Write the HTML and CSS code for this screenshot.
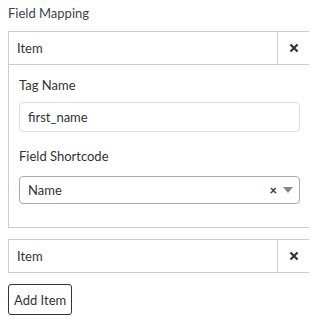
FILE: index.html
```html
<!DOCTYPE html>
<html>
<head>
<meta charset="utf-8">
<link rel="stylesheet" href="styles.css">
</head>
<body>
<div class="field">
  <div class="title">Field Mapping</div>
  <div class="item">
    <div class="item-head">
      <div class="item-name">Item</div>
      <button class="remove" aria-label="remove">
        <svg width="10" height="10" viewBox="0 0 10 10"><path d="M1.5 1.5 L8.5 8.5 M8.5 1.5 L1.5 8.5" stroke="#333" stroke-width="2.2" stroke-linecap="butt"/></svg>
      </button>
    </div>
    <div class="item-body">
      <label class="lbl">Tag Name</label>
      <div class="input">first_name</div>
      <label class="lbl lbl2">Field Shortcode</label>
      <div class="select">
        <span class="sel-text">Name</span>
        <span class="sel-clear">×</span>
        <span class="sel-arrow"></span>
      </div>
    </div>
  </div>
  <div class="item">
    <div class="item-head">
      <div class="item-name">Item</div>
      <button class="remove" aria-label="remove">
        <svg width="10" height="10" viewBox="0 0 10 10"><path d="M1.5 1.5 L8.5 8.5 M8.5 1.5 L1.5 8.5" stroke="#333" stroke-width="2.2" stroke-linecap="butt"/></svg>
      </button>
    </div>
  </div>
  <button class="add">Add Item</button>
</div>
</body>
</html>
```
FILE: styles.css
```css
body {
  margin: 8px;
  font-family: "Lato", "Noto Sans", sans-serif;
  font-size: 13px;
  color: #333;
  background: #fff;
}
.field {
  width: 303px;
}
.title {
  line-height: 17px;
  margin-top: -3px;
  margin-bottom: 9px;
  color: #3c434a;
}
.item {
  border: 1px solid #ccc;
  margin-bottom: 11px;
}
.item-head {
  display: flex;
  height: 32px;
}
.item-name {
  flex: 1;
  padding-left: 8px;
  line-height: 32px;
}
.remove {
  width: 33px;
  border: 0;
  border-left: 1px solid #ccc;
  background: #fff;
  padding: 0;
  display: flex;
  align-items: center;
  justify-content: center;
}
.item-body {
  border-top: 1px solid #ccc;
  padding: 12px 10px 23px 10px;
}
.lbl {
  display: block;
  line-height: 17px;
  margin-bottom: 8px;
}
.lbl2 {
  margin-top: 16px;
  margin-bottom: 11px;
}
.input {
  height: 28px;
  border: 1px solid #ddd;
  border-radius: 4px;
  padding-left: 8px;
  line-height: 28px;
}
.select {
  height: 26px;
  border: 1px solid #aaa;
  border-radius: 4px;
  display: flex;
  align-items: center;
  padding-left: 8px;
}
.sel-text {
  flex: 1;
}
.sel-clear {
  font-weight: bold;
  font-size: 13px;
  margin-right: 6px;
  color: #333;
}
.sel-arrow {
  width: 0;
  height: 0;
  border-left: 5px solid transparent;
  border-right: 5px solid transparent;
  border-top: 6px solid #888;
  margin-right: 6px;
}
.add {
  display: block;
  font-family: inherit;
  font-size: 13px;
  color: #333;
  background: #fff;
  border: 1px solid #333;
  border-radius: 3px;
  height: 31px;
  padding: 0 5px;
}
```
